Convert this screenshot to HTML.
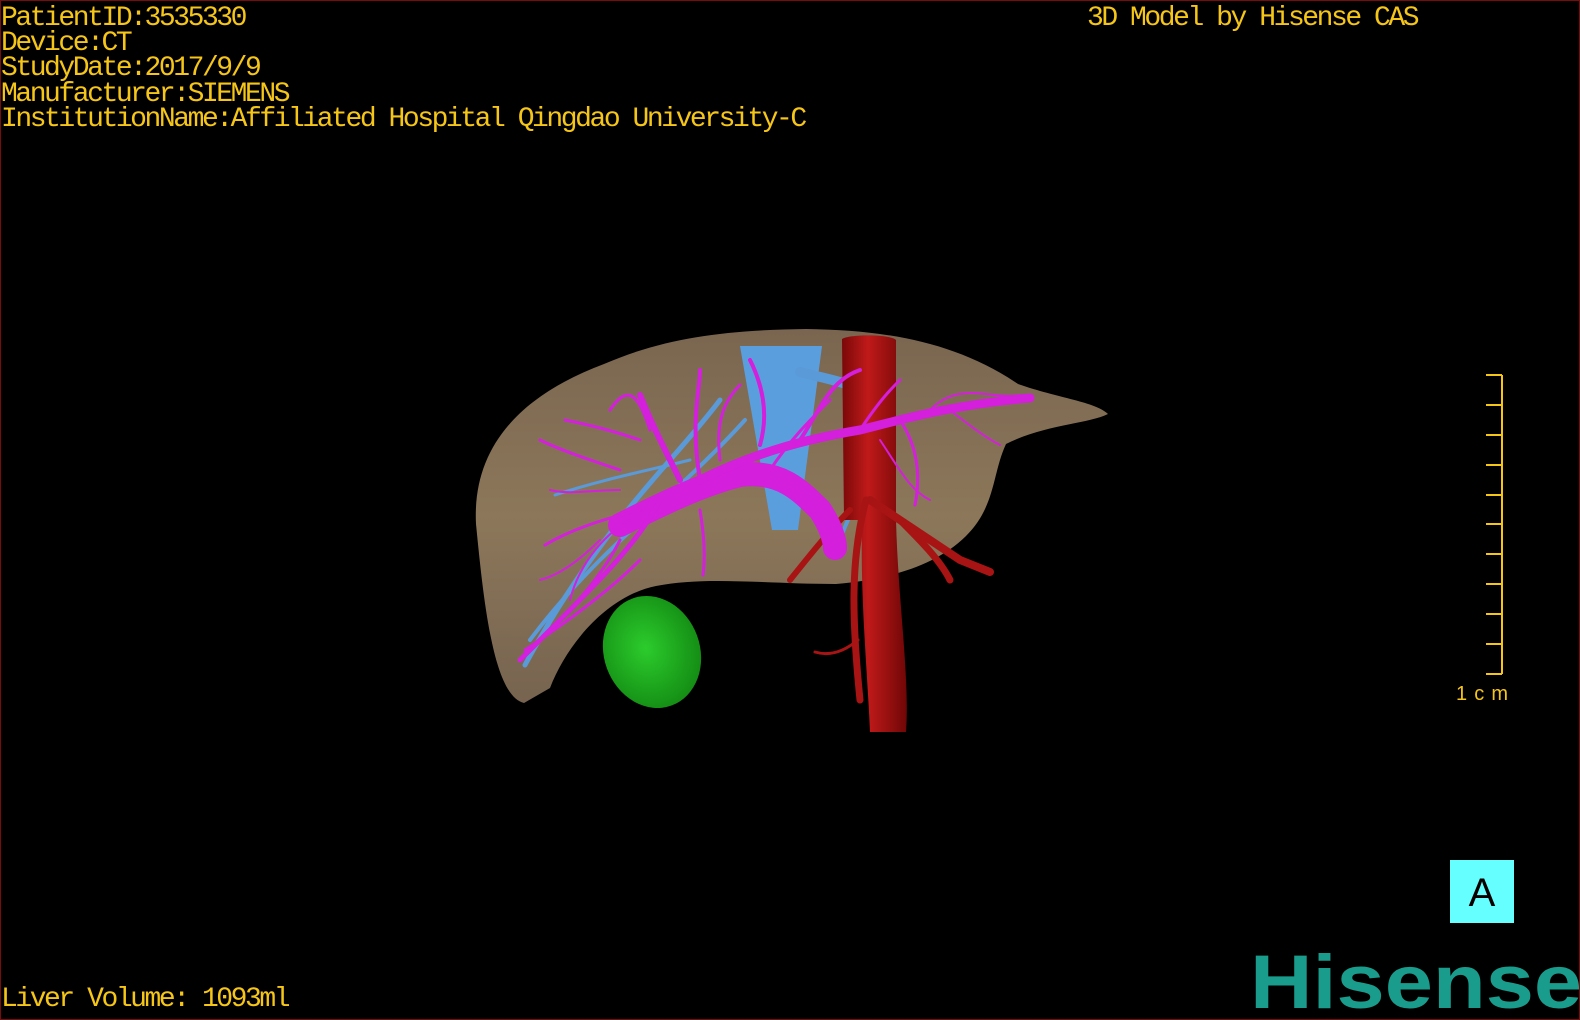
<!DOCTYPE html>
<html><head><meta charset="utf-8"><style>
html,body{margin:0;padding:0;background:#000;}
#f{position:relative;width:1578px;height:1018px;border:1px solid #7a0c0c;overflow:hidden;background:#000;}
.t{position:absolute;font-family:"Liberation Mono",monospace;font-size:28px;letter-spacing:-2.45px;color:#f5c518;line-height:25.2px;white-space:pre;}
</style></head><body><div id="f">
<div class="t" style="left:0;top:5px;">PatientID:3535330
Device:CT
StudyDate:2017/9/9
Manufacturer:SIEMENS
InstitutionName:Affiliated Hospital Qingdao University-C</div>
<div class="t" style="left:1086px;top:5px;">3D Model by Hisense CAS</div>
<div class="t" style="left:0;top:986px;">Liver Volume: 1093ml</div>

<svg width="1580" height="1020" style="position:absolute;left:-1px;top:-1px">
 <defs>
  <linearGradient id="lv" x1="0" y1="0" x2="0" y2="1"><stop offset="0" stop-color="#7a6650"/><stop offset="0.5" stop-color="#8c775a"/><stop offset="1" stop-color="#776450"/></linearGradient>
  <linearGradient id="ao" x1="0" y1="0" x2="1" y2="0"><stop offset="0" stop-color="#7a0808"/><stop offset="0.4" stop-color="#c01a1a"/><stop offset="1" stop-color="#700606"/></linearGradient>
  <radialGradient id="gb" cx="0.45" cy="0.45" r="0.6"><stop offset="0" stop-color="#2ccc2c"/><stop offset="1" stop-color="#138a13"/></radialGradient>
 </defs>
 <path fill="url(#lv)" d="M524,703 C494,696 484,606 476,524 C472,444 524,394 604,364 C664,338 724,330 806,329 C886,330 956,342 1018,384 C1058,398 1096,402 1108,414 C1088,424 1046,424 1006,444 C992,474 996,506 966,536 C936,566 886,580 836,584 C766,584 706,576 656,586 C606,596 566,646 550,688 Z"/>
 <path fill="#5b9ede" d="M740,346 L822,346 L798,530 L772,530 Z"/>
 <ellipse cx="652" cy="652" rx="48" ry="57" transform="rotate(-20 652 652)" fill="url(#gb)"/>
 <g stroke="#5a9ad8" fill="none" stroke-linecap="round">
  <path d="M800,372 C830,380 870,385 885,410 C890,440 880,470 860,500" stroke-width="10"/>
  <path d="M720,400 C690,440 650,480 620,520 C590,560 560,600 525,665" stroke-width="5"/>
  <path d="M745,420 C700,470 640,520 600,560 C570,590 545,620 530,640" stroke-width="4"/>
  <path d="M690,460 C650,470 600,480 555,495" stroke-width="3"/>
  <path d="M880,440 C870,480 850,510 840,540" stroke-width="4"/>
 </g>
 <path fill="url(#ao)" d="M842,339 C850,334 890,334 896,340 L896,520 C898,600 910,680 906,732 L870,732 C868,680 860,600 862,520 L844,520 Z"/>
 <g stroke="#a81414" fill="none" stroke-linecap="round">
  <path d="M870,500 C900,520 930,540 960,560 L990,572" stroke-width="8"/>
  <path d="M900,520 C920,540 940,560 950,580" stroke-width="7"/>
  <path d="M866,500 C850,560 852,620 860,700" stroke-width="7"/>
  <path d="M858,640 C840,655 825,655 815,652" stroke-width="3"/>
  <path d="M850,510 C830,530 810,555 790,580" stroke-width="6"/>
 </g>
 <g stroke="#d41fdc" fill="none" stroke-linecap="round">
  <path d="M620,525 C660,505 700,485 740,475 C780,470 800,490 820,510 C830,525 835,540 835,548" stroke-width="24"/>
  <path d="M700,480 C750,455 800,440 860,430 C900,420 950,405 1030,398" stroke-width="9"/>
  <path d="M660,500 C640,540 600,580 560,620 C540,640 525,655 520,660" stroke-width="5"/>
  <path d="M640,560 C610,590 570,620 525,650" stroke-width="3"/>
  <path d="M680,480 C660,440 650,420 640,395" stroke-width="6"/>
  <path d="M650,430 C640,400 630,380 610,410" stroke-width="3"/>
  <path d="M620,470 C590,460 560,450 540,440" stroke-width="3"/>
  <path d="M640,440 C610,430 590,425 565,420" stroke-width="3"/>
  <path d="M640,510 C600,520 570,530 545,545" stroke-width="3"/>
  <path d="M620,490 C590,490 570,495 550,490" stroke-width="2"/>
  <path d="M600,540 C580,560 560,575 540,580" stroke-width="2"/>
  <path d="M630,520 C610,530 580,560 570,600" stroke-width="2"/>
  <path d="M700,480 C690,420 700,390 700,370" stroke-width="4"/>
  <path d="M720,460 C715,420 725,400 740,385" stroke-width="3"/>
  <path d="M760,445 C770,410 760,380 750,360" stroke-width="4"/>
  <path d="M800,440 C820,410 830,380 860,370" stroke-width="4"/>
  <path d="M900,420 C920,450 920,480 915,505" stroke-width="3"/>
  <path d="M950,410 C975,430 990,440 1000,445" stroke-width="2"/>
  <path d="M930,410 C960,380 990,400 1020,395" stroke-width="2"/>
  <path d="M620,540 C600,580 570,610 540,640" stroke-width="3"/>
  <path d="M700,510 C705,540 705,560 703,575" stroke-width="3"/>
  <path d="M860,430 C880,400 890,390 900,380" stroke-width="3"/>
  <path d="M770,470 C790,440 810,420 830,400" stroke-width="3"/>
  <path d="M880,440 C900,470 910,490 930,500" stroke-width="2"/>
 </g>
 <g stroke="#f5c518" stroke-width="2">
  <line x1="1502" y1="375" x2="1502" y2="674"/>
  <line x1="1486" y1="375" x2="1502" y2="375"/><line x1="1486" y1="405" x2="1502" y2="405"/>
  <line x1="1486" y1="435" x2="1502" y2="435"/><line x1="1486" y1="465" x2="1502" y2="465"/>
  <line x1="1486" y1="495" x2="1502" y2="495"/><line x1="1486" y1="524" x2="1502" y2="524"/>
  <line x1="1486" y1="554" x2="1502" y2="554"/><line x1="1486" y1="584" x2="1502" y2="584"/>
  <line x1="1486" y1="614" x2="1502" y2="614"/><line x1="1486" y1="644" x2="1502" y2="644"/>
  <line x1="1486" y1="674" x2="1502" y2="674"/>
 </g>
 <text x="1456" y="700" font-family="Liberation Sans,sans-serif" font-size="20" fill="#f5c518" textLength="52" lengthAdjust="spacing">1cm</text>
 <rect x="1450" y="860" width="64" height="63" fill="#66ffff"/>
 <text x="1482" y="906" text-anchor="middle" font-family="Liberation Sans,sans-serif" font-size="40" fill="#000">A</text>
 <text x="1250" y="1008" font-family="Liberation Sans,sans-serif" font-weight="bold" font-size="76" fill="#1a9c8c" textLength="332" lengthAdjust="spacingAndGlyphs">Hisense</text>
</svg>
</div></body></html>
